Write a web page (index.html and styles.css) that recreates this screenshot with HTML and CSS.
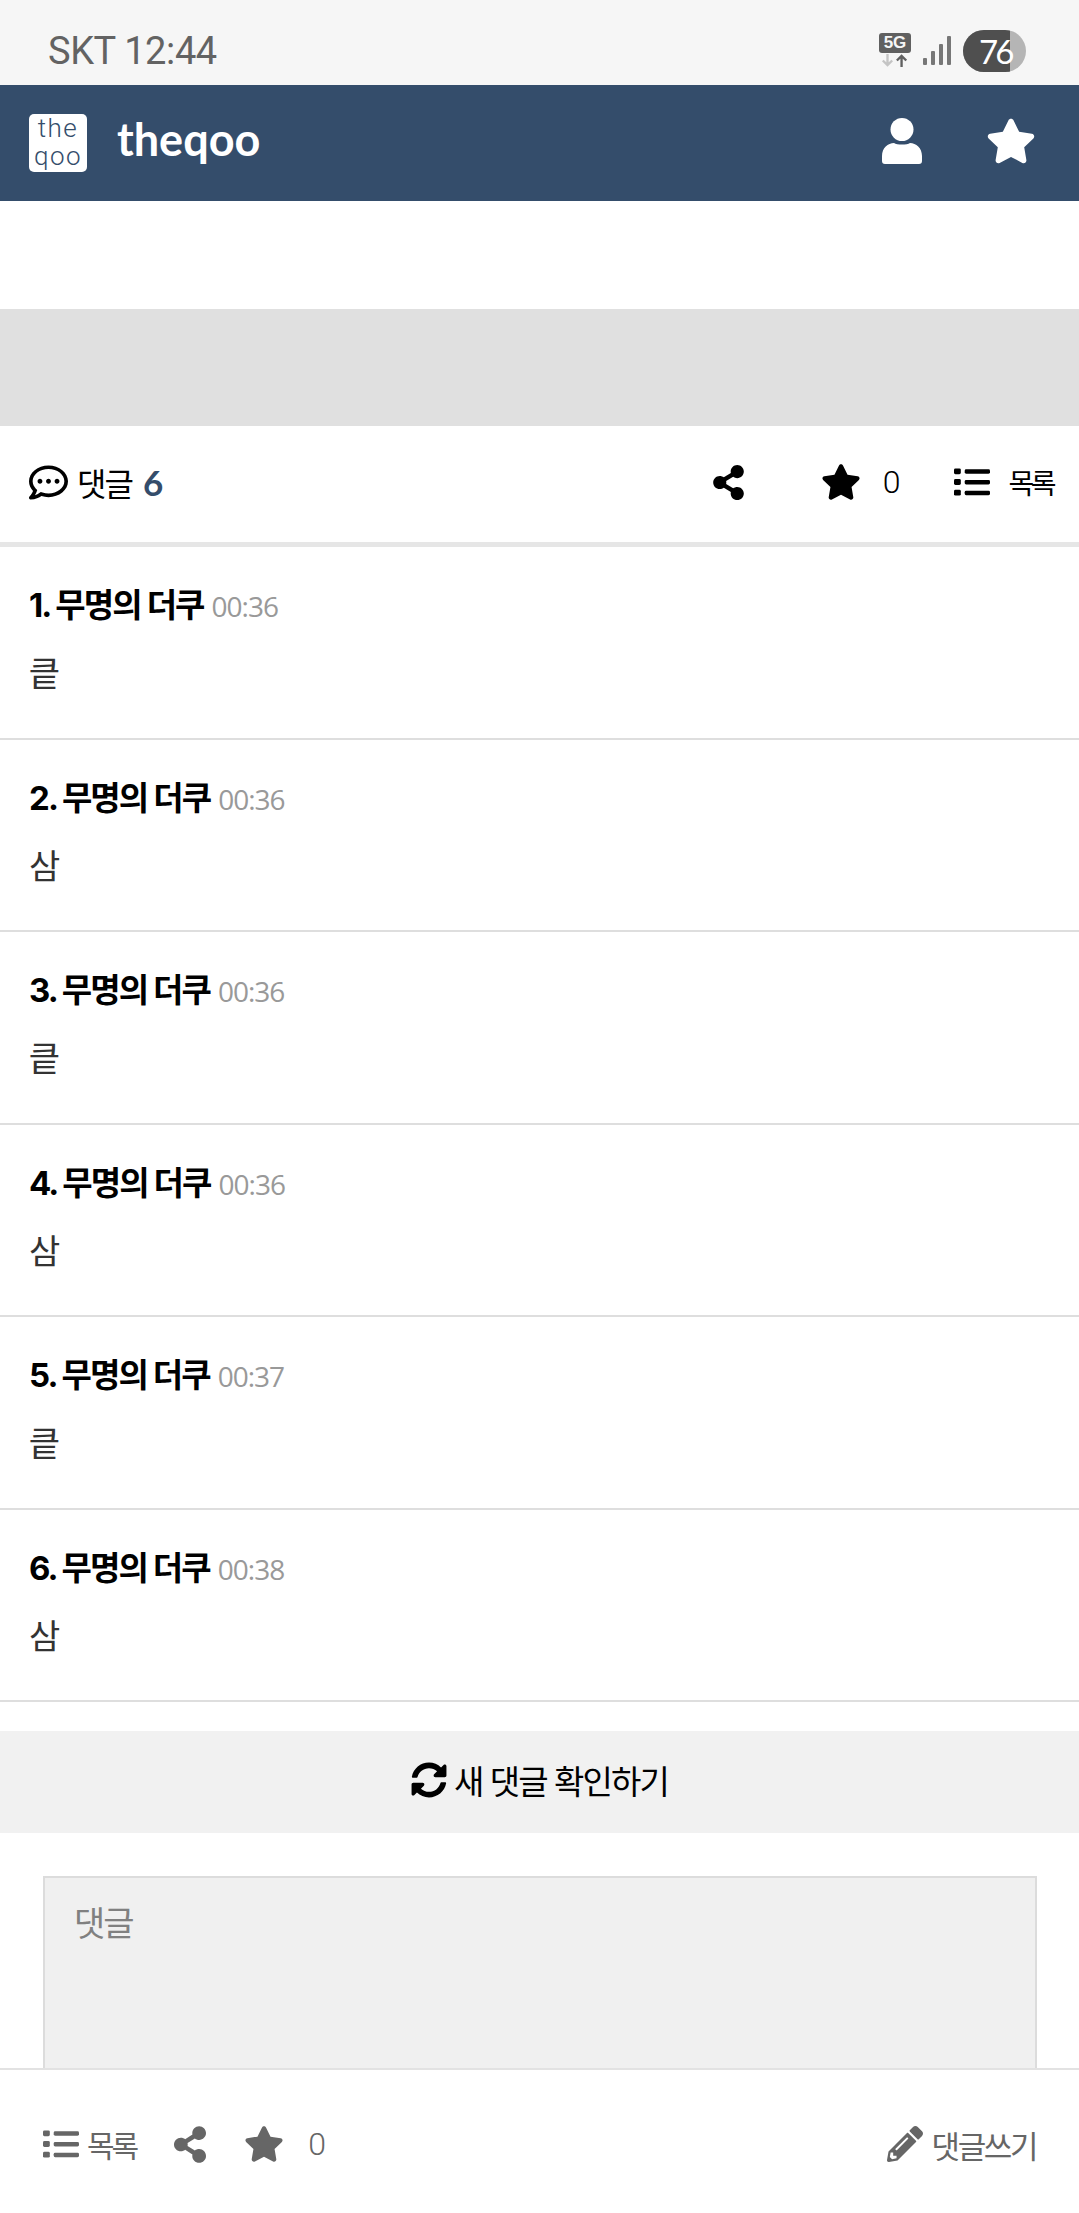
FILE: index.html
```html
<!DOCTYPE html>
<html lang="ko">
<head>
    <meta charset="UTF-8">
    <meta name="viewport" content="width=device-width, initial-scale=1.0">
    <title>theqoo</title>
    <link rel="stylesheet" href="styles.css">
</head>
<body>
    <svg class="defs" aria-hidden="true">
        <symbol id="i-star" viewBox="0 0 576 512"><path d="M259.3 17.8L194 150.2 47.9 171.5c-26.2 3.8-36.7 36.1-17.7 54.6l105.7 103-25 145.5c-4.5 26.3 23.2 46 46.4 33.7L288 439.6l130.7 68.7c23.2 12.2 50.9-7.4 46.4-33.7l-25-145.5 105.7-103c19-18.5 8.5-50.8-17.7-54.6L382 150.2 316.7 17.8c-11.7-23.6-45.6-23.9-57.4 0z"/></symbol>
        <symbol id="i-user" viewBox="0 0 40 46"><circle cx="20" cy="11.5" r="11.5"/><path d="M0 38C0 30 6 25 12 25C15 27 25 27 28 25C34 25 40 30 40 38V43Q40 46 37 46H3Q0 46 0 43Z"/></symbol>
        <symbol id="i-share" viewBox="0 0 448 512"><path d="M352 320c-22.608 0-43.387 7.819-59.79 20.895l-102.486-64.054a96.551 96.551 0 0 0 0-41.683l102.486-64.054C308.613 184.181 329.392 192 352 192c53.019 0 96-42.981 96-96S405.019 0 352 0s-96 42.981-96 96c0 7.158.79 14.13 2.276 20.841L155.79 180.895C139.387 167.819 118.608 160 96 160c-53.019 0-96 42.981-96 96s42.981 96 96 96c22.608 0 43.387-7.819 59.79-20.895l102.486 64.054A96.301 96.301 0 0 0 256 416c0 53.019 42.981 96 96 96s96-42.981 96-96-42.981-96-96-96z"/></symbol>
        <symbol id="i-list" viewBox="0 0 37 28"><rect x="0" y="0" width="7" height="6" rx="1.5"/><rect x="0" y="11" width="7" height="6" rx="1.5"/><rect x="0" y="22" width="7" height="6" rx="1.5"/><rect x="11" y="1" width="26" height="4.5" rx="1.5"/><rect x="11" y="12" width="26" height="4.5" rx="1.5"/><rect x="11" y="23" width="26" height="4.5" rx="1.5"/></symbol>
        <symbol id="i-sync" viewBox="0 0 512 512"><path d="M370.72 133.28C339.458 104.008 298.888 87.962 255.848 88c-77.458.068-144.328 53.178-162.791 126.85-1.344 5.363-6.122 9.15-11.651 9.15H24.103c-7.498 0-13.194-6.807-11.807-14.176C33.933 94.924 134.813 8 256 8c66.448 0 126.791 26.136 171.315 68.685L463.03 40.97C478.149 25.851 504 36.559 504 57.941V192c0 13.255-10.745 24-24 24H345.941c-21.382 0-32.09-25.851-16.971-40.971l41.75-41.749zM32 296h134.059c21.382 0 32.09 25.851 16.971 40.971l-41.75 41.75c31.262 29.273 71.835 45.319 114.876 45.28 77.418-.07 144.315-53.144 162.787-126.849 1.344-5.363 6.122-9.15 11.651-9.15h57.304c7.498 0 13.194 6.807 11.807 14.176C478.067 417.076 377.187 504 256 504c-66.448 0-126.791-26.136-171.315-68.685L48.97 471.03C33.851 486.149 8 475.441 8 454.059V320c0-13.255 10.745-24 24-24z"/></symbol>
        <symbol id="i-pencil" viewBox="0 0 512 512"><path d="M497.9 142.1l-46.1 46.1c-4.7 4.7-12.3 4.7-17 0l-111-111c-4.7-4.7-4.7-12.3 0-17l46.1-46.1c18.7-18.7 49.1-18.7 67.9 0l60.1 60.1c18.8 18.7 18.8 49.1 0 67.9zM284.2 99.8L21.6 362.4.4 483.9c-2.9 16.4 11.4 30.6 27.8 27.8l121.5-21.3 262.6-262.6c4.7-4.7 4.7-12.3 0-17l-111-111c-4.8-4.7-12.4-4.7-17.1 0zM124.1 339.9c-5.5-5.5-5.5-14.3 0-19.8l154-154c5.5-5.5 14.3-5.5 19.8 0s5.5 14.3 0 19.8l-154 154c-5.5 5.5-14.3 5.5-19.8 0zM88 424h48v36.3l-64.5 11.3-31.1-31.1L51.7 376H88v48z"/></symbol>
        <symbol id="i-comment" viewBox="0 0 512 512"><path d="M144 208c-17.7 0-32 14.3-32 32s14.3 32 32 32 32-14.3 32-32-14.3-32-32-32zm112 0c-17.7 0-32 14.3-32 32s14.3 32 32 32 32-14.3 32-32-14.3-32-32-32zm112 0c-17.7 0-32 14.3-32 32s14.3 32 32 32 32-14.3 32-32-14.3-32-32-32zM256 32C114.6 32 0 125.1 0 240c0 47.6 19.9 91.2 52.9 126.3C38 405.7 7 439.1 6.5 439.5c-6.6 7-8.4 17.2-4.6 26S14.4 480 24 480c61.5 0 110-25.7 139.1-46.3C192 442.8 223.2 448 256 448c141.4 0 256-93.1 256-208S397.4 32 256 32zm0 368c-26.7 0-53.1-4.1-78.4-12.1l-22.7-7.2-19.5 13.8c-14.3 10.1-33.9 21.4-57.5 29 7.3-12.1 14.4-25.7 19.9-40.2l10.6-28.1-20.6-21.8C69.7 314.1 48 282.2 48 240c0-88.2 93.3-160 208-160s208 71.8 208 160-93.3 160-208 160z"/></symbol>
    </svg>

    <div class="page">
        <div class="status-bar">
            <span class="status-text">SKT 12:44</span>
            <div class="status-icons">
                <div class="net">
                    <span class="net-label">5G</span>
                    <svg class="net-arrows" viewBox="0 0 32 16"><path d="M8 1v12M3 8l5 5 5-5" class="arrow-off"/><path d="M23 15V3M18 8l5-5 5 5" class="arrow-on"/></svg>
                </div>
                <svg class="signal" viewBox="0 0 28 29"><rect x="0" y="22" width="4" height="7" rx="1"/><rect x="8" y="15" width="4" height="14" rx="1"/><rect x="16" y="8" width="4" height="21" rx="1"/><rect x="24" y="0" width="4" height="29" rx="1"/></svg>
                <div class="battery"><span class="battery-level">76</span></div>
            </div>
        </div>

        <header class="top-bar">
            <div class="brand">
                <div class="brand-mark"><span>the</span><span>qoo</span></div>
                <span class="brand-name">theqoo</span>
            </div>
            <div class="top-actions">
                <svg class="icon-user"><use href="#i-user"/></svg>
                <svg class="icon-star"><use href="#i-star"/></svg>
            </div>
        </header>

        <div class="ad-blank"></div>
        <div class="ad-grey"></div>

        <div class="comment-head">
            <div class="comment-count">
                <svg class="icon-comment"><use href="#i-comment"/></svg>
                <span>댓글</span>
                <span class="count">6</span>
            </div>
            <div class="head-actions">
                <svg class="icon-share"><use href="#i-share"/></svg>
                <div class="head-vote">
                    <svg class="icon-star-sm"><use href="#i-star"/></svg>
                    <span>0</span>
                </div>
                <div class="head-list">
                    <svg class="icon-list"><use href="#i-list"/></svg>
                    <span>목록</span>
                </div>
            </div>
        </div>

        <ul class="comments">
            <li class="comment"><div class="comment-meta"><b>1. 무명의 더쿠</b><span class="time">00:36</span></div><p>킅</p></li>
            <li class="comment"><div class="comment-meta"><b>2. 무명의 더쿠</b><span class="time">00:36</span></div><p>삼</p></li>
            <li class="comment"><div class="comment-meta"><b>3. 무명의 더쿠</b><span class="time">00:36</span></div><p>킅</p></li>
            <li class="comment"><div class="comment-meta"><b>4. 무명의 더쿠</b><span class="time">00:36</span></div><p>삼</p></li>
            <li class="comment"><div class="comment-meta"><b>5. 무명의 더쿠</b><span class="time">00:37</span></div><p>킅</p></li>
            <li class="comment"><div class="comment-meta"><b>6. 무명의 더쿠</b><span class="time">00:38</span></div><p>삼</p></li>
        </ul>

        <div class="refresh">
            <svg class="icon-sync"><use href="#i-sync"/></svg>
            <span>새 댓글 확인하기</span>
        </div>

        <div class="write-area">
            <div class="write-box">댓글</div>
        </div>

        <footer class="bottom-bar">
            <div class="bottom-left">
                <div class="bottom-list">
                    <svg class="icon-list"><use href="#i-list"/></svg>
                    <span>목록</span>
                </div>
                <svg class="icon-share-b"><use href="#i-share"/></svg>
                <svg class="icon-star-b"><use href="#i-star"/></svg>
                <span class="bottom-zero">0</span>
            </div>
            <div class="bottom-write">
                <svg class="icon-pencil"><use href="#i-pencil"/></svg>
                <span>댓글쓰기</span>
            </div>
        </footer>
    </div>
</body>
</html>
```

FILE: styles.css
```css
* {
    box-sizing: border-box;
}
html, body {
    margin: 0;
    padding: 0;
}
body {
    font-family: "Noto Sans CJK KR", "Noto Sans", sans-serif;
    background-color: #fff;
    color: #000;
}
svg {
    display: block;
    fill: currentColor;
}
.defs {
    display: none;
}
.page {
    width: 1079px;
    height: 2213px;
    overflow: hidden;
    position: relative;
}

/* status bar */
.status-bar {
    height: 85px;
    background: #f6f6f6;
    display: flex;
    justify-content: space-between;
    align-items: center;
    padding: 16px 53px 0 48px;
    color: #636363;
}
.status-text {
    font-family: Roboto, sans-serif;
    font-size: 38px;
    letter-spacing: -0.4px;
}
.status-icons {
    display: flex;
    align-items: center;
}
.net {
    width: 32px;
    margin-right: 12px;
}
.net-label {
    display: block;
    height: 20px;
    background: #606060;
    border-radius: 3px;
    color: #f6f6f6;
    font-family: "Liberation Sans", sans-serif;
    font-weight: bold;
    font-size: 17px;
    line-height: 20px;
    text-align: center;
}
.net-arrows {
    width: 32px;
    height: 15px;
    fill: none;
    stroke-width: 2.5;
}
.arrow-off {
    stroke: #c4c4c4;
}
.arrow-on {
    stroke: #606060;
}
.signal {
    width: 28px;
    height: 29px;
    fill: #777;
    margin-right: 12px;
}
.battery {
    width: 63px;
    height: 42px;
    border-radius: 21px;
    background: #b5b5b5;
    overflow: hidden;
}
.battery-level {
    display: block;
    width: 47px;
    height: 42px;
    background: #4f4f4f;
    color: #fff;
    font-family: Lato, sans-serif;
    font-size: 33px;
    letter-spacing: -3px;
    line-height: 42px;
    padding-left: 16px;
    white-space: nowrap;
}

/* top bar */
.top-bar {
    height: 116px;
    background: #344d6b;
    color: #fff;
    display: flex;
    justify-content: space-between;
    align-items: center;
    padding: 0 43px 4px 29px;
}
.brand {
    display: flex;
    align-items: center;
    gap: 30px;
}
.brand-mark {
    width: 58px;
    height: 58px;
    margin-top: 4px;
    background: #fff;
    border-radius: 5px;
    color: #344d6b;
    font-family: Roboto, sans-serif;
    font-weight: 300;
    font-size: 26px;
    letter-spacing: 1.5px;
    line-height: 28px;
    text-align: center;
}
.brand-mark span {
    display: block;
}
.brand-name {
    font-family: Lato, sans-serif;
    font-weight: 700;
    font-size: 45px;
    line-height: 1;
    padding-bottom: 3px;
}
.top-actions {
    display: flex;
    align-items: center;
    gap: 64px;
}
.icon-user {
    width: 40px;
    height: 46px;
}
.icon-star {
    width: 50px;
    height: 46px;
}

/* ad areas */
.ad-blank {
    height: 108px;
}
.ad-grey {
    height: 117px;
    background: #e0e0e0;
}

/* comment head */
.comment-head {
    height: 121px;
    border-bottom: 5px solid #e6e6e6;
    display: flex;
    justify-content: space-between;
    align-items: center;
    padding: 0 26px 4px 29px;
    font-size: 32px;
}
.comment-count {
    display: flex;
    align-items: center;
    gap: 9px;
}
.comment-count span {
    letter-spacing: -2px;
}
.icon-comment {
    width: 39px;
    height: 39px;
}
.comment-count .count {
    color: #344d6b;
    font-family: Lato, sans-serif;
    font-weight: 700;
    font-size: 35px;
    margin-left: 2px;
}
.head-actions {
    display: flex;
    align-items: center;
}
.icon-share {
    width: 31px;
    height: 35px;
    margin-right: 77px;
}
.head-vote {
    display: flex;
    align-items: center;
    gap: 22px;
    margin-right: 54px;
    font-family: Roboto, sans-serif;
    font-weight: 300;
}
.icon-star-sm {
    width: 40px;
    height: 36px;
}
.head-list {
    display: flex;
    align-items: center;
    gap: 18px;
}
.head-list span {
    letter-spacing: -3.5px;
    font-size: 28px;
}
.icon-list {
    width: 36px;
    height: 28px;
}

/* comment rows */
.comments {
    list-style: none;
    margin: 0;
    padding: 0;
}
.comment {
    height: 192.5px;
    border-bottom: 2px solid #dedede;
    padding: 32px 29px 0;
}
.comment-meta {
    display: flex;
    align-items: baseline;
    gap: 8px;
    height: 50px;
}
.comment-meta b {
    font-family: Inter, "Noto Sans CJK KR", sans-serif;
    font-size: 33px;
    font-weight: 700;
    letter-spacing: -1.9px;
}
.time {
    font-family: "Open Sans", sans-serif;
    font-size: 28px;
    letter-spacing: -1px;
    color: #999;
}
.comment p {
    margin: 18px 0 0;
    font-size: 34px;
    line-height: 50px;
    color: #333;
}

/* refresh */
.refresh {
    margin-top: 29px;
    height: 102px;
    background: #f1f1f1;
    display: flex;
    justify-content: center;
    align-items: center;
    gap: 7px;
    padding-bottom: 4px;
    font-size: 33px;
    letter-spacing: -1.9px;
}
.icon-sync {
    width: 36px;
    height: 36px;
}

/* write */
.write-area {
    padding: 43px 42px 0 43px;
}
.write-box {
    height: 260px;
    background: #f0f0f0;
    border: 2px solid #dcdcdc;
    padding: 19px 29px;
    font-size: 34px;
    letter-spacing: -2px;
    color: #808080;
}
.bottom-bar {
    position: absolute;
    left: 0;
    right: 0;
    bottom: 0;
    height: 145px;
    background: #fff;
    border-top: 2px solid #e2e2e2;
    display: flex;
    justify-content: space-between;
    align-items: center;
    padding: 5px 43px 0 43px;
    color: #666;
    font-size: 32px;
}
.bottom-left {
    display: flex;
    align-items: center;
}
.bottom-list {
    display: flex;
    align-items: center;
    gap: 8px;
    margin-right: 38px;
}
.bottom-list span {
    letter-spacing: -3px;
    font-size: 30px;
}
.icon-share-b {
    width: 32px;
    height: 37px;
    margin-right: 38px;
}
.icon-star-b {
    width: 40px;
    height: 36px;
    margin-right: 24px;
}
.bottom-zero {
    font-family: Roboto, sans-serif;
    font-weight: 300;
}
.bottom-write {
    display: flex;
    align-items: center;
    gap: 9px;
}
.bottom-write span {
    font-size: 31px;
    letter-spacing: -2.4px;
}
.icon-pencil {
    width: 36px;
    height: 36px;
}
```
